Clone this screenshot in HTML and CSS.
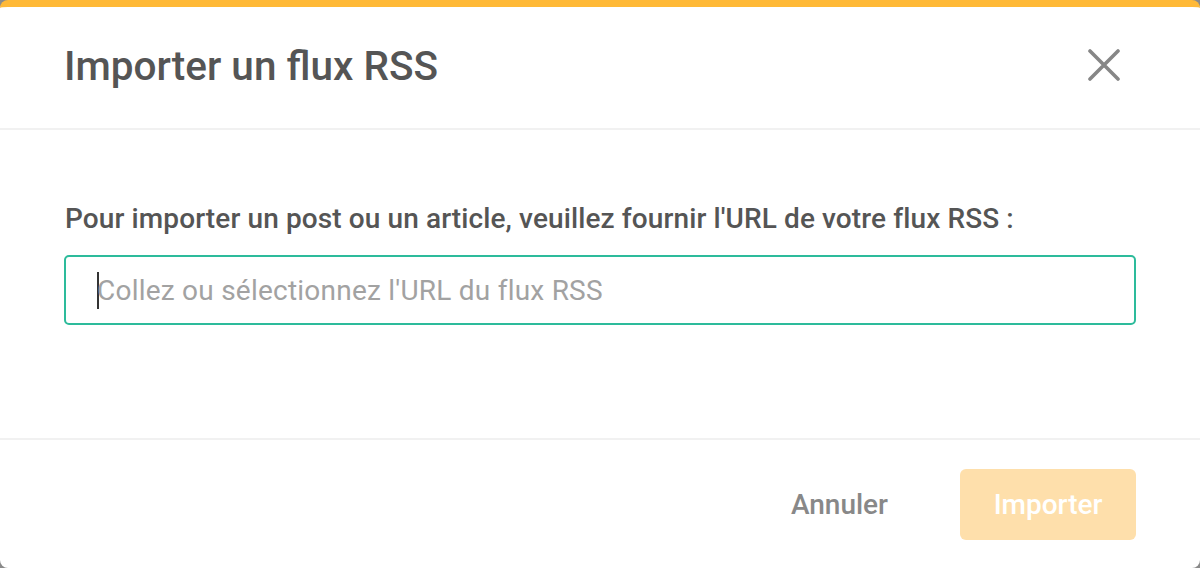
FILE: index.html
```html
<!DOCTYPE html>
<html lang="fr">
<head>
<meta charset="utf-8">
<title>Importer un flux RSS</title>
<link rel="stylesheet" href="styles.css">
</head>
<body>
<div class="dialog">
  <header class="dialog-header">
    <h1 class="dialog-title">Importer un flux RSS</h1>
    <button class="close-btn" type="button" aria-label="Fermer">
      <svg width="32" height="32" viewBox="0 0 32 32"><path d="M2 2 L30 30 M30 2 L2 30" stroke="#868686" stroke-width="3.6" stroke-linecap="round" fill="none"/></svg>
    </button>
  </header>
  <section class="dialog-body">
    <label class="field-label">Pour importer un post ou un article, veuillez fournir l'URL de votre flux RSS :</label>
    <div class="url-input"><span class="caret"></span><span class="placeholder">Collez ou sélectionnez l'URL du flux RSS</span></div>
  </section>
  <footer class="dialog-footer">
    <button class="btn-cancel" type="button">Annuler</button>
    <button class="btn-import" type="button">Importer</button>
  </footer>
</div>
</body>
</html>
```

FILE: styles.css
```css
html, body {
  margin: 0;
  padding: 0;
}
body {
  background: #8a8a8a;
  font-family: Roboto, "Liberation Sans", sans-serif;
}
.dialog {
  width: 1200px;
  height: 568px;
  box-sizing: border-box;
  background: #fff;
  border-top: 7px solid #ffb937;
  border-radius: 8px;
  display: flex;
  flex-direction: column;
  overflow: hidden;
}
.dialog-header {
  height: 123px;
  box-sizing: border-box;
  border-bottom: 2px solid #f1f1f1;
  display: flex;
  align-items: center;
  justify-content: space-between;
  padding: 0 80px 0 64px;
  flex: none;
}
.dialog-title {
  margin: -4px 0 0 0;
  font-size: 40.5px;
  letter-spacing: 0;
  font-weight: 500;
  color: #555;
  line-height: 48px;
}
.close-btn {
  border: 0;
  background: none;
  padding: 0;
  width: 32px;
  height: 32px;
  display: block;
  margin-top: -5px;
}
.close-btn svg { display: block; }
.dialog-body {
  flex: 1;
  padding: 73px 64px 0 64px;
  display: flex;
  flex-direction: column;
  gap: 20px;
}
.field-label {
  font-size: 28px;
  letter-spacing: 0.11px;
  font-weight: 500;
  color: #555;
  line-height: 32px;
  padding-left: 1px;
}
.url-input {
  height: 70px;
  box-sizing: border-box;
  border: 2px solid #2dbb9b;
  border-radius: 5px;
  padding-left: 31px;
  display: flex;
  align-items: center;
}
.caret {
  width: 2px;
  height: 37px;
  background: #333;
  flex: none;
}
.placeholder {
  font-size: 28px;
  letter-spacing: 0.23px;
  color: #a2a2a2;
  margin-left: -2px;
}
.dialog-footer {
  height: 130px;
  box-sizing: border-box;
  border-top: 2px solid #f1f1f1;
  flex: none;
  display: flex;
  align-items: center;
  justify-content: flex-end;
  padding: 0 64px 0 0;
  gap: 72px;
}
.btn-cancel {
  border: 0;
  background: none;
  padding: 0;
  font-family: inherit;
  font-size: 28px;
  font-weight: 500;
  color: #888;
}
.btn-import {
  border: 0;
  width: 176px;
  height: 71px;
  border-radius: 6px;
  background: #fedfab;
  color: #fff;
  font-family: inherit;
  font-size: 28px;
  font-weight: 500;
}
```
